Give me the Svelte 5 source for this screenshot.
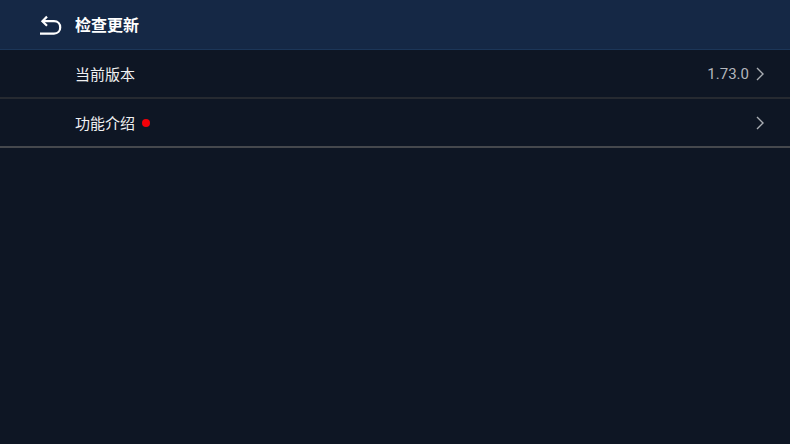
<script lang="ts">
const rows = [
	{ label: '当前版本', value: '1.73.0', dot: false },
	{ label: '功能介绍', value: '', dot: true }
];
</script>

<div class="page">
	<header class="topbar">
		<button class="back" aria-label="返回">
			<svg width="22" height="20" viewBox="0 0 22 20" fill="none" stroke="#fff" stroke-width="2.2">
				<path d="M7 1.6 L2.4 6.2 L7 10.8" />
				<path d="M2.4 6.2 H14 C18 6.2 20.2 9 20.2 12.4 C20.2 16 17.8 18.6 14 18.6 H0" />
			</svg>
		</button>
		<h1>检查更新</h1>
	</header>

	{#each rows as row}
		<div class="row">
			<span class="label">{row.label}</span>
			{#if row.dot}<span class="dot"></span>{/if}
			<span class="value">{row.value}</span>
			<svg class="chevron" width="10" height="14" viewBox="0 0 10 14" fill="none" stroke="#a9adb3" stroke-width="1.4">
				<path d="M2 1 L8 7 L2 13" />
			</svg>
		</div>
	{/each}
</div>

<style>
:global(body) {
	margin: 0;
	background: #0e1624;
	font-family: "Roboto", "Noto Sans CJK SC", sans-serif;
}
.page {
	height: 444px;
	overflow: hidden;
	background: #0e1624;
}
.topbar {
	display: flex;
	align-items: center;
	height: 50px;
	box-sizing: border-box;
	padding-left: 40px;
	background: #152845;
	border-bottom: 1px solid #1c3658;
}
.back {
	display: flex;
	width: 35px;
	padding: 0;
	border: none;
	background: none;
}
h1 {
	margin: 0 0 2px;
	font-size: 16px;
	font-weight: 700;
	color: #fff;
}
.row {
	display: flex;
	align-items: center;
	height: 49px;
	box-sizing: border-box;
	padding: 0 25px 0 75px;
	border-bottom: 2px solid #262a31;
}
.row:last-child {
	border-bottom-color: #45484d;
}
.label {
	font-size: 15px;
	color: #f0f1f2;
}
.dot {
	width: 8px;
	height: 8px;
	margin-left: 7px;
	border-radius: 50%;
	background: #f40008;
}
.value {
	margin-left: auto;
	margin-right: 6px;
	font-size: 15px;
	color: #b4b7bc;
}
</style>
